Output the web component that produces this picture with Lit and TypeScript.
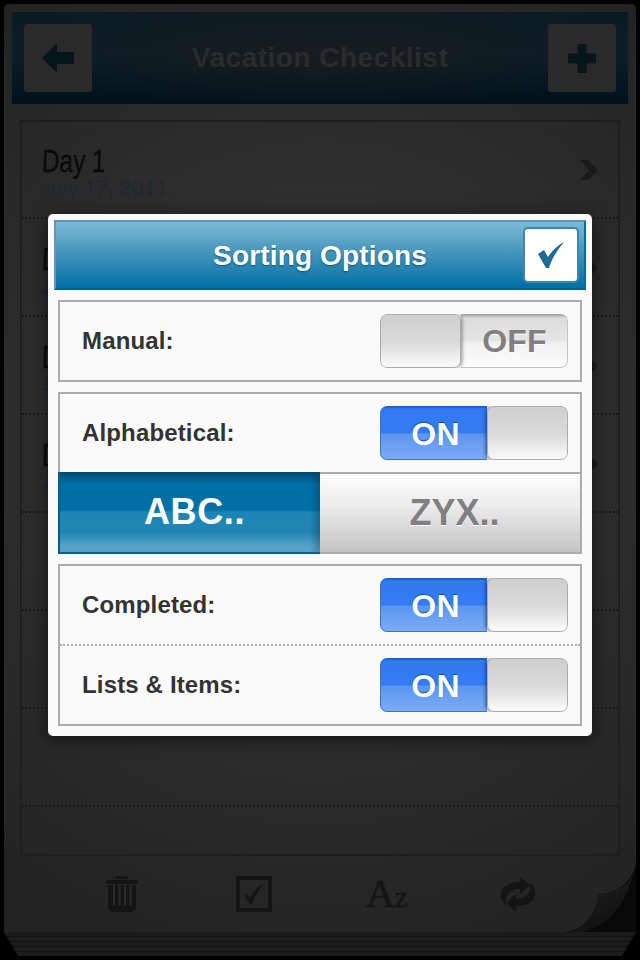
import { LitElement, html, css } from "lit";
import { customElement } from "lit/decorators.js";

@customElement("app-toggle")
class AppToggle extends LitElement {
  static properties = { on: { type: Boolean } };
  on = false;
  static styles = css`
    :host { display: block; width: 188px; height: 54px; }
    .sw { display: flex; width: 188px; height: 54px; border-radius: 7px; overflow: hidden; font: bold 32px "Liberation Sans", sans-serif; }
    .on .label { color: #fff; background: linear-gradient(#0f56c0 0, #3079f0 3px, #337cf3 27px, #5c95ee 28px, #7cadf9 100%); box-shadow: inset 1px 0 0 #3a75c8, inset 0 -1px 0 #3a75c8; padding: 2px 0 0 4px; text-shadow: 0 -1px 1px #0e4aa0; border-radius: 7px 0 0 7px; }
    .off .label { color: #808080; background: linear-gradient(#9a9a9a 0, #dcdcdc 4px, #e6e6e6 27px, #f0f0f0 28px, #fdfdfd 100%); box-shadow: inset -1px 0 0 #c4c4c4, inset 0 -1px 0 #c4c4c4; border-radius: 0 7px 7px 0; text-shadow: 0 1px 0 #fff; }
    .label { display: flex; align-items: center; justify-content: center; flex: 1; box-sizing: border-box; }
    .knob { flex: none; box-sizing: border-box; width: 81px; height: 54px; border: 1px solid #ababab; border-radius: 7px; background: linear-gradient(#cfcfcf, #d9d9d9 50%, #fbfbfb); }
    .on .knob { box-shadow: -2px 0 3px rgba(0,30,90,.45); }
    .off .knob { box-shadow: 2px 0 3px rgba(0,0,0,.3); position: relative; }
  `;
  render() {
    return this.on
      ? html`<div class="sw on"><span class="label">ON</span><span class="knob"></span></div>`
      : html`<div class="sw off"><span class="knob"></span><span class="label">OFF</span></div>`;
  }
}

const rows = [
  ["Day 1", "July 17, 2011"],
  ["D", "J"],
  ["D", "J"],
  ["D", "J"],
  ["", ""], ["", ""], ["", ""], ["", ""],
];

@customElement("app-root")
class AppRoot extends LitElement {
  static styles = css`
    :host { display: block; width: 640px; height: 960px; overflow: hidden; background: #000; position: relative; font-family: "Liberation Sans", sans-serif; }
    .pad { position: relative; margin: 0 4px; top: 4px; height: 928px; border-radius: 5px 5px 0 0; padding: 8px 8px 0; box-sizing: border-box; display: flex; flex-direction: column;
      background: radial-gradient(ellipse 85% 58% at 50% 47%, #383838, #232323 100%); }
    .stack { margin: 4px 4px 0; height: 24px; clip-path: polygon(0 0, 100% 0, calc(100% - 14px) 100%, 14px 100%);
      background: repeating-linear-gradient(#1b1b1b 0 4px, #131313 4px 5px); }
    header { flex: none; height: 92px; box-sizing: border-box; padding: 12px; display: flex; align-items: center; justify-content: space-between;
      background: radial-gradient(ellipse 50% 60% at 50% 45%, rgba(28,28,28,.7), rgba(0,0,0,0)), linear-gradient(#0b1b24, #0a1c27 50%, #00111b); }
    .btn { width: 68px; height: 68px; border-radius: 3px; background: #2a2a2a; display: flex; align-items: center; justify-content: center; }
    h1 { margin: 0; font: bold 28px "Liberation Sans", sans-serif; letter-spacing: .5px; color: #2b2b2b; }
    .list { flex: none; margin: 16px 8px 0; height: 736px; box-sizing: border-box; border: 2px solid #1e1e1e; overflow: hidden; }
    .row { box-sizing: border-box; height: 98px; border-bottom: 2px dotted #1c1c1c; display: flex; align-items: center; justify-content: space-between; padding: 5px 20px 0 20px; }
    .row:first-child { height: 97px; }
    .name { font: 32px/34px "Liberation Sans", sans-serif; color: #0a0a0a; transform: scaleX(.76) skewX(-3deg); transform-origin: left; white-space: nowrap; -webkit-text-stroke: .4px #0a0a0a; margin-top: -2px; }
    .date { font: 20px/22px Lato, sans-serif; letter-spacing: .6px; color: #1a2a33; margin-top: -2px; white-space: nowrap; }
    .chev { margin-bottom: 4px; }
    .tools { flex: 1; display: flex; align-items: flex-start; gap: 94px; padding: 20px 0 0 94px; }
    .trash { margin-right: 4px; }
    .az { width: 40px; height: 36px; font: 40px/36px "Liberation Serif", serif; color: #141414; -webkit-text-stroke: .5px #141414; white-space: nowrap; }
    .az small { font-size: 29px; }
    .curl { position: absolute; right: 0; bottom: 0; width: 76px; height: 72px; }
    .dialog { position: absolute; left: 48px; top: 214px; width: 544px; height: 522px; box-sizing: border-box; padding: 6px; background: #fafafa; border-radius: 5px; box-shadow: 0 3px 18px rgba(0,0,0,.55); }
    .title { box-sizing: border-box; height: 70px; position: relative; display: flex; align-items: center; justify-content: center; padding-top: 2px; border: 2px solid; border-color: #5e96ae #0a6f9f #005f8c #5e96ae; background: linear-gradient(#7db9d5, #3f93ba 50%, #006fa5); color: #fff; font: bold 28px "Liberation Sans", sans-serif; letter-spacing: .15px; text-shadow: 0 1px 2px rgba(0,50,80,.6); margin-bottom: 10px; }
    .ok { position: absolute; right: 5px; top: 5px; width: 56px; height: 56px; box-sizing: border-box; background: #fff; border: 2px solid #3f87a8; border-radius: 5px; display: flex; align-items: center; justify-content: center; }
    .box { margin: 0 4px 10px; border: 2px solid #acacac; box-sizing: border-box; }
    .line { display: flex; align-items: center; justify-content: space-between; padding: 0 12px 0 22px; height: 78px; color: #333; font: bold 24px "Liberation Sans", sans-serif; letter-spacing: .15px; }
    .line.sep { border-bottom: 2px dotted #acacac; }
    .seg { display: flex; height: 82px; margin: 0 -2px -2px; font: bold 36px "Liberation Sans", sans-serif; }
    .seg div { box-sizing: border-box; display: flex; align-items: center; justify-content: center; padding-left: 9px; }
    .abc { flex: none; width: 262px; color: #fff; letter-spacing: .6px; border-left: 2px solid #005f8c; border-bottom: 2px solid #005f8c; background: linear-gradient(#004d78, #006fa5 12px, #0070a6 38px, #1b86b5 40px, #2085b4 60px, #6eb0d0); box-shadow: inset -5px 0 6px rgba(0,40,70,.3); }
    .zyx { flex: 1; color: #808080; border: 2px solid #acacac; border-left: 0; background: linear-gradient(#fdfdfd, #ececec 40%, #c4c4c4); text-shadow: 0 1px 0 #fff; }
  `;
  render() {
    const c = "#141414";
    return html`
      <div class="pad">
        <header>
          <div class="btn"><svg width="32" height="30" viewBox="0 0 32 30"><path d="M0 15 15 0v9h17v12H15v9z" fill="#06141c"/></svg></div>
          <h1>Vacation Checklist</h1>
          <div class="btn"><svg width="28" height="29" viewBox="0 0 28 29"><path d="M9.500 0h9v9.500H28v10h-9.500V29h-9v-9.500H0v-10h9.500z" fill="#06141c"/></svg></div>
        </header>
        <div class="list">
          ${rows.map((r) => html`<div class="row">
            <div>${r[0] ? html`<div class="name">${r[0]}</div><div class="date">${r[1]}</div>` : ""}</div>
            ${r[0] ? html`<svg class="chev" width="18" height="20" viewBox="0 0 18 20"><path d="M0 0h8l10 10L8 20H0l9-10z" fill="#1a1a1a"/></svg>` : ""}
          </div>`)}
        </div>
        <div class="tools">
          <svg class="trash" width="32" height="36" viewBox="0 0 32 36" fill="${c}">
            <path d="M10 2a2 2 0 0 1 2-2h8a2 2 0 0 1 2 2v1H10zM2 4h28a2 2 0 0 1 0 4H2a2 2 0 0 1 0-4zM2 9h28v22a5 5 0 0 1-5 5H7a5 5 0 0 1-5-5z"/>
            <path d="M8 9v21M13.500 9v21M19 9v21M24.500 9v21" stroke="#2a2a2a" stroke-width="2"/>
          </svg>
          <svg width="36" height="36" viewBox="0 0 36 36">
            <path d="M0 0h36v36H0zM4 4v28h28V4z" fill="${c}" fill-rule="evenodd"/>
            <path d="M8 19l3-2 3 5c3-6 7-11 14-14-5 5-9 12-12 20h-2z" fill="${c}"/>
          </svg>
          <div class="az">A<small>z</small></div>
          <svg width="36" height="36" viewBox="0 0 36 36" fill="${c}">
            <path id="a" d="M6 30C-3 21-2 7 20 6V0L30 9 20 18V13C10 13 4 20 6 30Z"/>
            <path d="M6 30C-3 21-2 7 20 6V0L30 9 20 18V13C10 13 4 20 6 30Z" transform="rotate(180 18 18)"/>
          </svg>
          <svg class="curl" viewBox="0 0 76 72">
            <defs><linearGradient id="f" x1="0.3" y1="0.2" x2="0.8" y2="0.9"><stop offset="0" stop-color="#1e1e1e"/><stop offset="1" stop-color="#0f0f0f"/></linearGradient></defs>
            <path d="M76 0V72H3C22 72 38 54 38 34 55 34 70 25 76 5Z" fill="#090909"/>
            <path d="M38 34C38 54 22 72 3 72H22C46 68 66 45 73 14 68 26 55 34 38 34Z" fill="url(#f)"/>
          </svg>
        </div>
      </div>
      <div class="stack"></div>
      <div class="dialog">
        <div class="title">
          <span>Sorting Options</span>
          <div class="ok"><svg width="26" height="26" viewBox="0 0 26 26"><path d="M0 12 6 8 10 15C14 9 20 3 26 0 20 7 14 16 11 26H8Z" fill="#1f6a93"/></svg></div>
        </div>
        <div class="box"><div class="line">Manual:<app-toggle></app-toggle></div></div>
        <div class="box">
          <div class="line">Alphabetical:<app-toggle on></app-toggle></div>
          <div class="seg"><div class="abc">ABC..</div><div class="zyx">ZYX..</div></div>
        </div>
        <div class="box">
          <div class="line sep">Completed:<app-toggle on></app-toggle></div>
          <div class="line">Lists &amp; Items:<app-toggle on></app-toggle></div>
        </div>
      </div>
    `;
  }
}
void AppToggle; void AppRoot;
